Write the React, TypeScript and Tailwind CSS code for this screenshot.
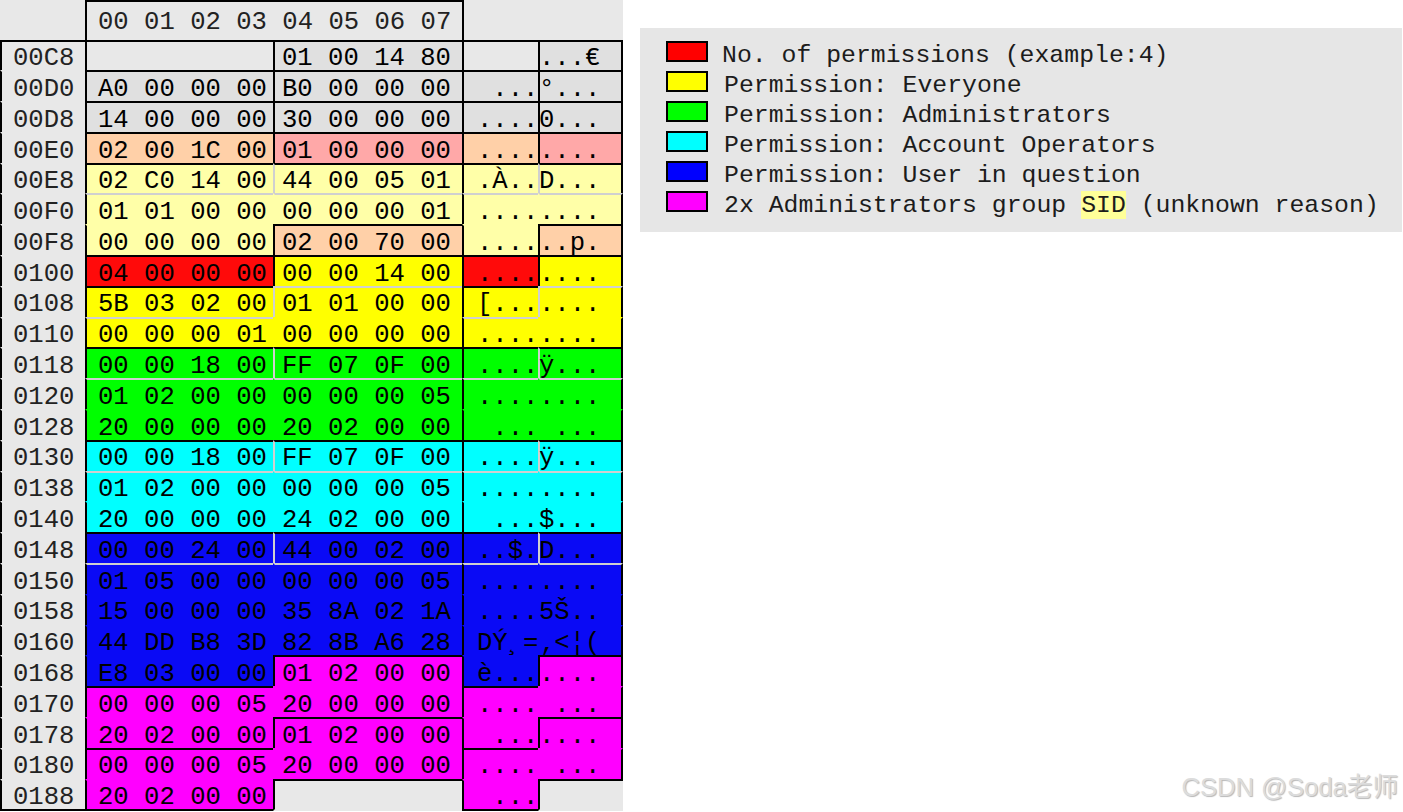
const MONO = "font-['Liberation_Mono',monospace]";

// fill colours of the byte groups
const fill = {
  blank: "bg-[#e8e8e8]",
  gray: "bg-[#e0e0e0]",
  orange: "bg-[#ffd0a8]",
  pink: "bg-[#ffa8a8]",
  pale: "bg-[#ffffa8]",
  red: "bg-[#ff0a0a]",
  yellow: "bg-[#ffff00]",
  green: "bg-[#00ff00]",
  cyan: "bg-[#00ffff]",
  blue: "bg-[#0a0af5]",
  magenta: "bg-[#ff00ff]",
};

type Fill = keyof typeof fill;
type Line = "k" | "g" | "n";

const topLine: Record<Line, string> = {
  k: "border-t-black",
  g: "border-t-[#d0d0d0]",
  n: "border-t-transparent",
};

const leftLine: Record<Line, string> = {
  k: "border-l-black",
  g: "border-l-[#d0d0d0]",
  n: "border-l-transparent",
};

type Row = {
  offset: string;
  hexL: string;
  hexR: string;
  ascL: string;
  ascR: string;
  fillL: Fill;
  fillR: Fill;
  topL: Line;
  topR: Line;
  mid: Line;
};

const r = (
  offset: string,
  hexL: string,
  hexR: string,
  ascL: string,
  ascR: string,
  fillL: Fill,
  fillR: Fill,
  topL: Line,
  topR: Line,
  mid: Line,
): Row => ({ offset, hexL, hexR, ascL, ascR, fillL, fillR, topL, topR, mid });

const rows: Row[] = [
  r("00C8", "", "01 00 14 80", "", "...€", "blank", "gray", "k", "k", "k"),
  r("00D0", "A0 00 00 00", "B0 00 00 00", " ...", "°...", "gray", "gray", "k", "k", "k"),
  r("00D8", "14 00 00 00", "30 00 00 00", "....", "0...", "gray", "gray", "k", "k", "k"),
  r("00E0", "02 00 1C 00", "01 00 00 00", "....", "....", "orange", "pink", "k", "k", "k"),
  r("00E8", "02 C0 14 00", "44 00 05 01", ".À..", "D...", "pale", "pale", "k", "k", "g"),
  r("00F0", "01 01 00 00", "00 00 00 01", "....", "....", "pale", "pale", "g", "g", "n"),
  r("00F8", "00 00 00 00", "02 00 70 00", "....", "..p.", "pale", "orange", "n", "k", "k"),
  r("0100", "04 00 00 00", "00 00 14 00", "....", "....", "red", "yellow", "k", "k", "k"),
  r("0108", "5B 03 02 00", "01 01 00 00", "[...", "....", "yellow", "yellow", "k", "g", "g"),
  r("0110", "00 00 00 01", "00 00 00 00", "....", "....", "yellow", "yellow", "g", "n", "n"),
  r("0118", "00 00 18 00", "FF 07 0F 00", "....", "ÿ...", "green", "green", "k", "k", "g"),
  r("0120", "01 02 00 00", "00 00 00 05", "....", "....", "green", "green", "g", "g", "n"),
  r("0128", "20 00 00 00", "20 02 00 00", " ...", " ...", "green", "green", "n", "n", "n"),
  r("0130", "00 00 18 00", "FF 07 0F 00", "....", "ÿ...", "cyan", "cyan", "k", "k", "g"),
  r("0138", "01 02 00 00", "00 00 00 05", "....", "....", "cyan", "cyan", "g", "g", "n"),
  r("0140", "20 00 00 00", "24 02 00 00", " ...", "$...", "cyan", "cyan", "n", "n", "n"),
  r("0148", "00 00 24 00", "44 00 02 00", "..$.", "D...", "blue", "blue", "k", "k", "g"),
  r("0150", "01 05 00 00", "00 00 00 05", "....", "....", "blue", "blue", "g", "g", "n"),
  r("0158", "15 00 00 00", "35 8A 02 1A", "....", "5Š..", "blue", "blue", "n", "n", "n"),
  r("0160", "44 DD B8 3D", "82 8B A6 28", "DÝ¸=", "‚<¦(", "blue", "blue", "n", "n", "n"),
  r("0168", "E8 03 00 00", "01 02 00 00", "è...", "....", "blue", "magenta", "n", "k", "k"),
  r("0170", "00 00 00 05", "20 00 00 00", "....", " ...", "magenta", "magenta", "k", "n", "n"),
  r("0178", "20 02 00 00", "01 02 00 00", " ...", "....", "magenta", "magenta", "n", "k", "k"),
  r("0180", "00 00 00 05", "20 00 00 00", "....", " ...", "magenta", "magenta", "k", "n", "n"),
  r("0188", "20 02 00 00", "", " ...", "", "magenta", "blank", "n", "k", "k"),
];

const legend = [
  { color: "bg-[#ff0000]", text: "No. of permissions (example:4)", first: true },
  { color: "bg-[#ffff00]", text: "Permission: Everyone" },
  { color: "bg-[#00ff00]", text: "Permission: Administrators" },
  { color: "bg-[#00ffff]", text: "Permission: Account Operators" },
  { color: "bg-[#0000ff]", text: "Permission: User in question" },
];

function HexTable() {
  return (
    <div className={`w-[623px] shrink-0 bg-[#e8e8e8] text-[25.6px] leading-none whitespace-pre text-black ${MONO}`}>
      <div className="flex h-[39.5px]">
        <div className="w-[85px]" />
        <div className="flex w-[379px] items-center border-x-2 border-t-2 border-black pt-[4px] pl-[11px] text-[#222]">
          00 01 02 03 04 05 06 07
        </div>
      </div>
      {rows.map((row, i) => {
        const last = i === rows.length - 1;
        const h = last ? "h-[32.8px] border-b-2 border-b-black" : "h-[30.8px]";
        const cell = `flex items-center border-t-2 border-l-2 pt-[6px] ${h}`;
        return (
          <div key={row.offset} className="grid grid-cols-[85px_188px_189px_76px_85px]">
            <div className={`${cell} border-l-black pl-[11px] text-[#222] ${i === 0 ? "border-t-black" : "border-t-transparent"}`}>
              {row.offset}
            </div>
            <div className={`${cell} pl-[11px] border-l-black ${topLine[row.topL]} ${fill[row.fillL]}`}>{row.hexL}</div>
            <div className={`${cell} pl-[7px] ${leftLine[row.mid]} ${topLine[row.topR]} ${fill[row.fillR]} ${last ? "border-b-transparent" : ""}`}>
              {row.hexR}
            </div>
            <div className={`${cell} pl-[13px] border-l-black ${topLine[row.topL]} ${fill[row.fillL]}`}>{row.ascL}</div>
            <div
              className={`${cell} ${leftLine[row.mid]} ${topLine[row.topR]} ${fill[row.fillR]} ${
                last ? "border-b-transparent" : "border-r-2 border-r-black"
              }`}
            >
              <span className="-ml-px">{row.ascR}</span>
            </div>
          </div>
        );
      })}
    </div>
  );
}

function Swatch({ color }: { color: string }) {
  return <div className={`mt-[2px] h-[21px] w-[42px] shrink-0 border-2 border-black ${color}`} />;
}

function Legend() {
  return (
    <div className={`mt-[28px] ml-[17px] h-[204px] w-[762px] bg-[#e6e6e6] pt-[11px] pl-[26px] text-[24.8px] leading-[30px] whitespace-pre text-[#1c1c1c] ${MONO}`}>
      {legend.map((item) => (
        <div key={item.text} className="flex h-[30px] items-start">
          <Swatch color={item.color} />
          <span className={`mt-px ${item.first ? "ml-[14px]" : "ml-[16px]"}`}>{item.text}</span>
        </div>
      ))}
      <div className="flex h-[30px] items-start">
        <Swatch color="bg-[#ff00ff]" />
        <span className="mt-px ml-[16px]">
          2x Administrators group <span className="bg-[#ffff99]">SID</span> (unknown reason)
        </span>
      </div>
    </div>
  );
}

export default function App() {
  return (
    <div className="relative flex h-[812px] w-[1403px] items-start overflow-hidden bg-white">
      <HexTable />
      <Legend />
      <div className="absolute right-[5px] bottom-[9px] font-['Liberation_Sans','Noto_Sans_CJK_SC',sans-serif] text-[25.6px] leading-8 text-[#dcdcdc] [text-shadow:1px_1px_1px_#b8b8b8]">
        CSDN @Soda老师
      </div>
    </div>
  );
}
